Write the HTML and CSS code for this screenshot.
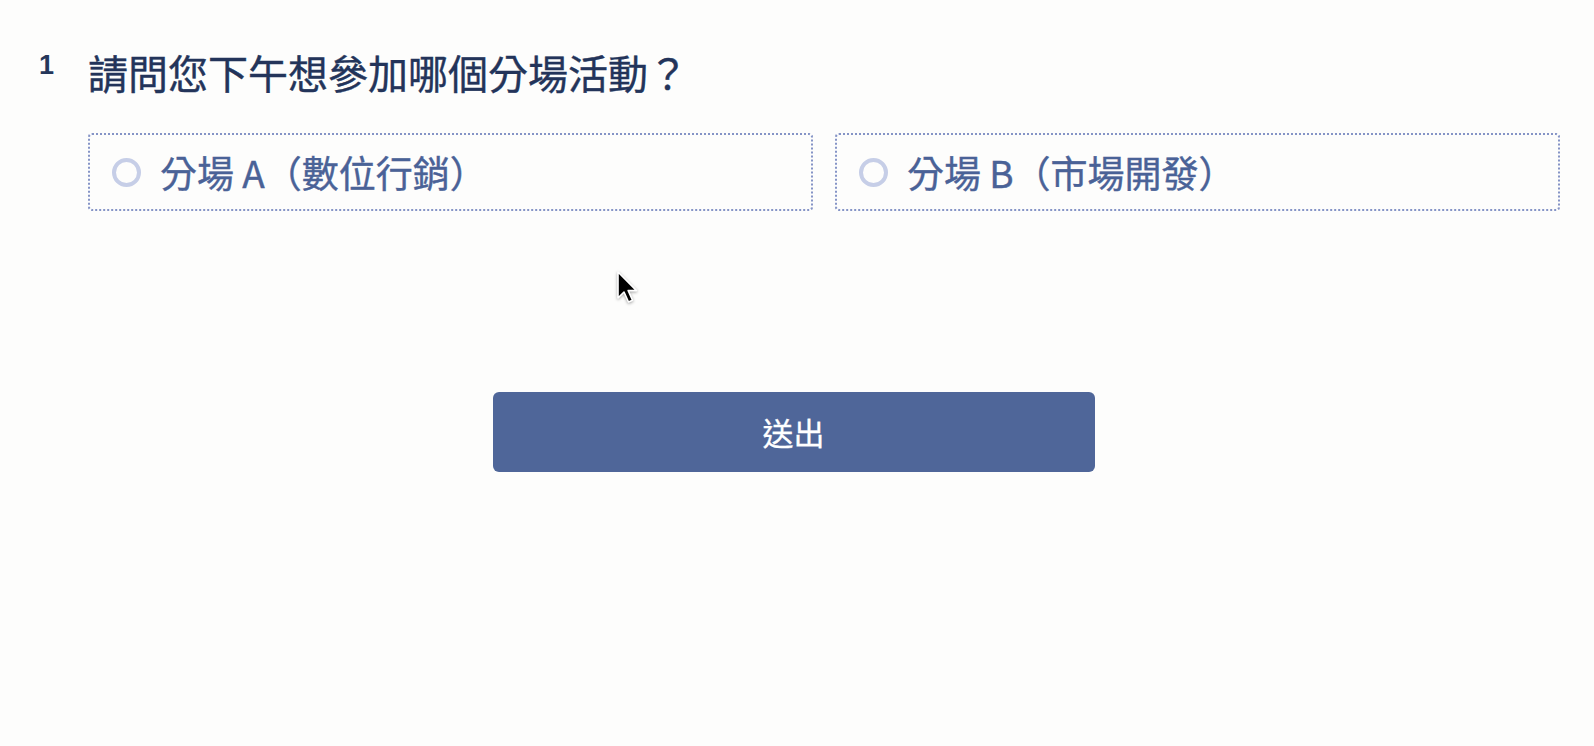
FILE: index.html
```html
<!DOCTYPE html>
<html lang="zh-Hant">
<head>
<meta charset="utf-8">
<title>問卷</title>
<link rel="stylesheet" href="styles.css">
</head>
<body>
<main class="page">
  <section class="question">
    <div class="qnum">1</div>
    <div class="qbody">
      <h1 class="qtext">請問您下午想參加哪個分場活動？</h1>
      <div class="options">
        <label class="option">
          <span class="radio"></span>
          <span class="opt-label">分場 A（數位行銷）</span>
        </label>
        <label class="option">
          <span class="radio"></span>
          <span class="opt-label">分場 B（市場開發）</span>
        </label>
      </div>
    </div>
  </section>
  <div class="actions">
    <button class="submit" type="button">送出</button>
  </div>
  <svg class="cursor" width="24" height="36" viewBox="0 0 24 36" aria-hidden="true">
    <path d="M2 1 L2 27 L8 21 L12.5 31 L16.5 29.2 L12.2 19.6 L20.5 19.6 Z" fill="#000" stroke="#fff" stroke-width="1.6" stroke-linejoin="round"/>
  </svg>
</main>
</body>
</html>
```
FILE: styles.css
```css
html, body {
  margin: 0;
  padding: 0;
  background: #fdfdfc;
}

body {
  font-family: "Noto Sans CJK TC", "Noto Sans", sans-serif;
}

.page {
  position: relative;
  min-height: 746px;
  box-sizing: border-box;
  padding: 47px 34px 0 39px;
}

.question {
  display: flex;
  align-items: flex-start;
}

.qnum {
  width: 49px;
  flex: none;
  font-family: "Liberation Sans", Arial, sans-serif;
  font-weight: 700;
  font-size: 27px;
  line-height: 27px;
  margin-top: 5px;
  color: #25375a;
}

.qbody {
  flex: 1;
}

.qtext {
  margin: 0;
  font-weight: 400;
  font-size: 40px;
  line-height: 50px;
  color: #23345a;
  -webkit-text-stroke: 0.4px #23345a;
}

.options {
  margin-top: 36px;
  display: grid;
  grid-template-columns: 1fr 1fr;
  gap: 22px;
}

.option {
  height: 78px;
  box-sizing: border-box;
  border: 2px dotted #8594c6;
  border-radius: 4px;
  display: flex;
  align-items: center;
  padding-left: 22px;
  cursor: pointer;
}

.radio {
  width: 29px;
  height: 29px;
  box-sizing: border-box;
  border: 4px solid #c6cee7;
  border-radius: 50%;
  flex: none;
}

.opt-label {
  margin-left: 19px;
  font-size: 37px;
  font-weight: 400;
  line-height: 48px;
  color: #4a6297;
  -webkit-text-stroke: 0.4px #4a6297;
}

.actions {
  display: flex;
  justify-content: center;
  margin-top: 181px;
  padding-right: 12px;
}

.submit {
  width: 602px;
  height: 80px;
  border: none;
  border-radius: 6px;
  background: #4f6699;
  color: #ffffff;
  font-family: "Noto Sans CJK TC", "Noto Sans", sans-serif;
  font-size: 31px;
  font-weight: 400;
  line-height: 40px;
  padding: 0;
  -webkit-text-stroke: 0.3px #ffffff;
}

.cursor {
  position: absolute;
  left: 616px;
  top: 271px;
  filter: drop-shadow(0 1px 1.5px rgba(0, 0, 0, 0.35));
}
```
